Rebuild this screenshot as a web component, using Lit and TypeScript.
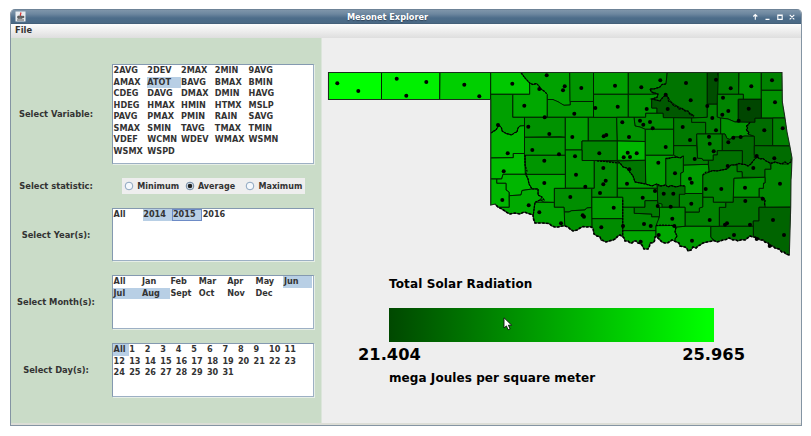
import { LitElement, html, svg, css } from "lit";
import { customElement, property } from "lit/decorators.js";
import { classMap } from "lit/directives/class-map.js";

const OUTLINE =
  "328.5,72.5 782,72.5 782.3,101.7 785,118 787,132 790,147 792,158 791.5,172 791,180 790.7,207 789.3,255 786,254 784,252 781.7,252 779,249 775,248 773,246 770,246 768,243 765,242 763,240 760,240 757,237.5 753,237 750,236 748,237.7 745,240 742,239.5 738,241 735,239.5 733,240 729,238 726,239.5 723,240 720,241 717,242 714,240.5 710,241.5 707,242 703,243 700,245 698,246 696,248 693,247 691,250 688,251 687,248.5 685,247 680,246 679,243 676,241.7 672,240 668,242.7 665,243 662,242 660,240 656.5,236.5 655,237 654.5,241 653,242.7 650,243 649.5,246 648,249 644,249 642,245 640,243.5 638,243 636,241 634,241 632,243 630,243 628,241 625,241 624,238 622.7,236.7 620,235 618,236 615,239 613,240 609,241 606,242 603,240.5 601,240 600,236.7 597,236 594,234 593,228 590,226.5 587,227 583,226.5 580,228 577,230 573,231 570,229 568,227 565,226 562,226 558,227 555,227 552,226 549,223.5 543,223 535,223 533.5,219 533,215 530,214 527,213 524,212 520,214 515,213 510,214 507,212.5 505,211 501,208.5 498,207 495,204 490.7,205 490.7,99.5 328.5,99.5";

// [fill level of the green channel, polygon points]
const COUNTIES: [number, string][] = [
  [255, "328,72 381.5,72 381.5,100 328,100"],
  [240, "381.5,72 440,72 439.7,100 381.5,100"],
  [207, "440,72 491,72 490.7,100 439.7,100"],
  [200, "490.7,72 521,72 525,78 529.7,83 529.7,94.3 490.7,94.3"],
  [168, "529.7,83 533,84.5 536.5,83.5 539,86 541,89 544,91 547.3,94.3 547.3,117.3 512.7,117.3 512.7,94.3 529.7,94.3"],
  [162, "521,72 570,72 570.3,105 564,105.3 561,104 558,101.7 555,101 553,99.5 547.3,99.5 547.3,94.3 544,91 541,89 539,86 536.5,83.5 533,84.5 529.7,83 525,78"],
  [150, "569.7,72 593.5,72 593.5,101.5 570,101.5"],
  [154, "547.3,99.5 553,99.5 558,101.7 564,105.3 570.3,105 570.3,101.5 593.5,101.5 593.5,117.3 547.3,117.3"],
  [160, "490.7,94.3 512.7,94.3 512.7,117.3 524.5,117.3 524.5,125.7 520,126 518,128 517,132 514,133 512,135 506,133.5 502,131 501.5,128 499,125 496,130 494,131 490.7,133"],
  [182, "490.7,133 494,131 496,130 499,125 501.5,128 502,131 506,133.5 512,135 514,133 517,132 518,128 520,126 524.5,125.7 525,153.5 513.3,153.5 513.3,157.7 490.7,158"],
  [146, "524.5,117.3 565.3,117.3 565.3,137.3 560,136.7 524.5,137.3"],
  [150, "524.5,137.3 565.3,137.3 565.3,155.3 524.5,155.3"],
  [158, "565.3,117.3 588.3,117.3 588.3,141 582,141 582,150 565.3,150"],
  [140, "588.3,117.3 616.7,117.3 617.3,141 588.3,141"],
  [134, "582,141 617.3,141 617.3,160.5 582,160.5"],
  [152, "565.3,150 582,150 582,160.5 594.3,160.5 594.3,188.3 565.3,188.3"],
  [140, "594.3,160.5 617.3,162 617.3,197.3 591.7,197.3 591.7,188.3 594.3,188.3"],
  [158, "593.5,72 628.3,72 628.3,94.3 593.5,94.3"],
  [150, "593.5,94.3 628.3,94.3 628.3,117.3 593.5,117.3"],
  [136, "628.3,72 667.3,72 666,84 662,84.5 660,87 654,89 650,89 651.5,92 655,93 651.7,94.3 628.3,94.3"],
  [148, "628.3,94.3 651.7,94.3 658,94 657,97.5 651.7,99 651.7,108 657,108 657,113.3 645.7,113.3 645.7,117.3 628.3,117.3"],
  [116, "667.3,72 707.3,72 707.3,117.3 691.7,118 693,115 685,110 677,106 671,102 668,97 665.7,95 660,101 651.7,99 657,97.5 658,94 655,93 651.5,92 650,89 654,89 660,87 662,84.5 666,84"],
  [88, "651.7,99 660,101 663,97 665.7,95 668,97 668.5,101 671,102 674,106 677,106 679,109 682,108.5 685,111 688,111 690,114.5 694,115.5 693,118 663.3,117.7 663,113.3 657,113.3 657,108 651.7,108"],
  [140, "645.7,113.3 663,113.3 663.3,117.7 673.7,117.7 673.7,129.3 645,129.3 640,127 635,126 634,117.3 645.7,117.3"],
  [146, "616.7,117.3 634,117.3 635,126 640,127 645.3,129.3 645.3,141.5 617.3,141"],
  [182, "617.3,141 645.3,141.5 645.3,160.3 617.3,160.3"],
  [144, "645.3,129.3 673.7,129.3 673.7,155.3 645.3,155.3"],
  [122, "673.7,117.7 691.7,118 691.7,122.3 705.7,122.3 705.7,134 696.7,134 696.7,145.7 673.7,145.7"],
  [128, "707.3,104 717.3,104 717.3,117 720.7,118 720.7,134 705.7,134 705.7,122.3 691.7,122.3 691.7,118 707.3,117.3"],
  [78, "707.3,72 717.7,72 717.7,75 719,77 717.3,104 707.3,104"],
  [124, "718.3,72 739,72 738.7,94.3 717.7,94.3"],
  [144, "739,72 761.3,72 761.3,99.3 743.3,99.3 743.3,94.3 738.7,94.3"],
  [132, "717.3,94.3 743.3,94.3 743.3,99.3 738.3,99.3 738.3,121 735,122 728,119 720.7,118 717.3,117"],
  [130, "761.3,72 783,72 783,90.3 761.3,90.3"],
  [144, "761.3,90.3 783,90.3 783,102 785.5,118 761.3,118"],
  [70, "738.3,99.3 761.3,99.3 761.3,118.3 755,118.3 755,122.3 738.3,122.3"],
  [146, "720.7,118 728,119 735,122 750,122.3 748,125 746,126 748,128 746,130 749,132 748,134 754.3,136.3 745,136 740,137 733,137 730,139.5 727,138.5 725,134 720.7,134"],
  [108, "750,122.3 755,122.3 755,118.3 772.7,118.3 772.7,145.7 754.3,145.7 754.3,136.3 748,134 749,132 746,130 748,128 746,126 748,125"],
  [128, "772.7,118 785,118 792,146 772.7,145.7"],
  [130, "696.7,134 722.3,134 722.3,150.7 717.3,150.7 717.3,155 713.3,155 713.3,160.3 703,160.3 702,158.5 697.5,158.3"],
  [106, "722.3,134 725,134 727,138.5 730,139.5 733,137 740,137 745,136 754.3,136.3 754.3,155 757,158 753,161 751,164 748,166 745,164.5 742.3,164.3 742.3,150.7 722.3,150.7"],
  [108, "754.3,145.7 793,146 793,160 791,162 788,164 785,162 781.7,164 778,163 775,162 773,163.5 770,163 766,161 763,158.5 760,159 756.7,156 754.3,158"],
  [112, "708.3,160.3 713.3,160.3 713.3,155 717.3,155 717.3,150.7 742.3,150.7 742.3,164.3 739,163.5 735,165 731,165 727,169 722,170 717,171 713,170.5 709,172"],
  [120, "736.7,165 739,163.5 742.3,164.3 745,164.5 748,166 751,164 753,161 757,157 760,159 763,158.5 766,161 770,163 771,169.3 765,169.3 765,177.3 742.3,177.3 742,171.7 737,171.7"],
  [134, "771,163 775,162 781.7,164 788,164 793,160 791.5,207 765,207.3 764.5,203 765,200 759,197.3 759,188.3 763.3,188.3 763.5,183 765,183 765,169.3 771,169.3"],
  [130, "702.7,175 706,172 709,172 713,170.5 717,171 722,170 727,169 731,165 737,165 737,171.7 742,171.7 742.3,178 734,178.3 733.3,202.3 713.3,202.3 713.3,197.3 702.7,197.3"],
  [146, "734,178.3 765,177.3 765,183 763.5,183 763.3,188.3 759,188.3 759,197.3 733.3,197.3"],
  [116, "733.3,197.3 763,197.3 765,200 764.5,203 765,207.3 759,207.3 759,221 753.3,221 753.3,226.3 719.3,226.3 719.3,207.3 725.7,207.3 725.7,202.3 733.3,202.3"],
  [100, "759,207.3 791,207.3 791,256 753.3,245 753.3,221 759,221"],
  [120, "710.7,226.3 753.3,226.3 753.3,240 717,245 714,240 710.7,237"],
  [130, "702.7,197.3 713.3,197.3 713.3,202.3 725.7,202.3 725.7,207.3 719.3,207.3 719.3,226.3 685,226.3 685,212 699.3,212 699.3,208 702.7,207"],
  [154, "676,227 685,226.3 710.7,226.3 710.7,237 717,245 688,253 674,244 675,239 677,236 675,232"],
  [156, "683.3,165 708.3,164.3 709,172 702.7,175 702.7,193.5 679.7,193.5 680.7,173 683.3,172"],
  [132, "679.3,193.5 702.7,193.5 702.7,207 699.3,208 699.3,212 685,212 685,207.3 679.3,207.3"],
  [126, "673.7,145.7 696.7,145.7 697.5,158.3 702,158.5 703,160.3 708.3,160.3 708.3,164.3 683.3,165 683.3,156 680,158 677,157 673.7,155.3"],
  [138, "665.7,158.3 677,157 680,158 683.3,156 683.3,172 680.7,173 680.7,186 676,187 671,185.5 668,187 665.7,185"],
  [158, "645.3,155.3 673.7,155.3 677,157 665.7,158.3 665.7,185 661,186 656.7,184 652,186 645.7,184"],
  [118, "617.3,161 645.3,160.3 645.7,184 640,183 635,182 633,176 629,171 626.7,168 623,167 620,163"],
  [156, "617.3,161 620,163 623,167 626.7,168 629,171 633,176 635,182 640,183 645.7,184 652,186 656.7,184 657.5,188.3 617.3,188.3"],
  [140, "617.3,188.3 657.3,188.3 657.7,200.7 645,200.7 645,207.3 622.7,207.3 622.7,197.3 617.3,197.3"],
  [138, "622.7,207.3 634.3,207.3 634.3,213.3 651.7,214 651.7,216.7 659,216.7 659,225.7 656,225.7 656,230.7 622.7,230.7"],
  [122, "634.3,207.3 645,207.3 645,200.7 657.7,200.7 658,207.3 659.5,207.3 659.5,216.7 651.7,216.7 651.7,214 634.3,213.3"],
  [110, "657.3,185.7 661,186 665.7,185 668,187 671,185.5 676,187 680.7,185.7 685,186 685,194.3 679.3,194.3 679.3,207.3 662,207.3 662,204 657.7,203"],
  [142, "659.5,207.3 685,207.3 685,226.3 676,227 672,225.5 656,225.7 659.5,216.7"],
  [164, "622.7,230.7 656,230.7 656,245 648,252 622.7,244"],
  [168, "656,225.7 672,225.5 676,227 675,232 677,236 675,239 674,246 656,245"],
  [158, "591.7,197.3 622.7,197.3 622.7,218.7 591.7,218.7"],
  [140, "591.7,218.7 622.7,218.7 622.7,244 592,244"],
  [142, "554.3,188.3 591.7,188.3 591.7,207.5 586.7,208 585,210 571.7,210.7 569,212 564,212 564,207.3 554.3,207.3"],
  [146, "564,212 569,212 571.7,210.7 585,210 586.7,208 591.7,207.5 592,235 565,235"],
  [162, "535,202.3 554.3,202.3 554.3,207.3 564,207.3 565,230 535,226 533,215 534,209"],
  [170, "525.3,174.3 565.3,174.3 565.3,188.3 554.3,188.3 554.3,202.3 544,202 540,200 542,197 538,195 538,189 532,189 529,184 528,179"],
  [150, "525.3,155.3 565.3,155.3 565.3,174.3 525.3,174.3"],
  [188, "490.7,158 513.3,157.7 513.3,153.5 524.5,153.5 525.3,174.3 503,174.3 501.7,179 490.7,179"],
  [182, "496.7,179 501.7,179 503,174.3 525.3,174.3 528,179 529,184 532,189 522,190.5 521,195 509.3,195.7 509,192 506,190 506,183.3 496.7,183.3"],
  [182, "490.7,179 496.7,179 496.7,183.3 506,183.3 506,190 509,192 509.3,207.3 500,207.3 490.7,208"],
  [170, "509.3,195.7 521,195 522,190.5 532,189 538,189 538,195 542,197 540,200 535,202.3 534,209 533,218 509,218 499,207.3 509.3,207.3"],
];

// Rivers that follow county borders, drawn with a rougher line.
const RIVERS = [
  "521,73 525,78 529.7,83 533,84.5 536.5,83.5 539,86 541,89 544,91 547.3,94.3",
  "491,133 494,131 496,130 499,125 501.5,128 502,131 506,133.5 512,135 514,133 517,132 518,128 520,126",
  "666,84 662,84.5 660,87 654,89 650,89 651.5,92 655,93 658,94 657,97.5 651.7,99 660,101 663,97 665.7,95 668,97 668.5,101 671,102 674,106 677,106 679,109 682,108.5 685,111 688,111 690,114.5 694,115.5",
  "597,161 605,161.5 612,162.5 620,163 623,167 626.7,168 629,171 633,176 635,182 640,183 645.7,184 652,186 656.7,184 661,186 665.7,185 668,187 671,185.5 676,187 680.7,185.7 685,186",
  "665.7,158.3 668,159 671,157.5 677,157 680,158 683.3,156",
  "702.7,175 706,172 709,172 713,170.5 717,171 722,170 727,169 731,165 735,165 739,163.5 742.3,164.3 745,164.5 748,166 751,164 753,161 757,157 760,159 763,158.5 766,161 770,163 773,163.5 775,162 778,163 781.7,164 785,162 788,164 791,162 791.5,158",
  "525,155 525,165 527,171 526,174 528,179 529,184 532,189 538,189 538,195 542,197 544,200 540,200 535,202.3 534,209 533,218",
  "622.7,200 622.7,236",
  "750,122.3 748,125 746,126 748,128 746,130 749,132 748,134",
  "763,198 765,200 764.5,206",
  "656,225.7 662,225 672,225.5 676,227 675,232 677,236 675,239",
];

const STATIONS =
  "337.3,83.3 358.3,91 396.7,78.7 406.3,95.7 426.3,82 464.3,84.7 479.3,96.3 512.3,83.7 546.7,75.3 539.3,89 564.7,86.3 563,90.3 581.3,88 524.3,105.7 574.3,113.7 544.7,117.3 498,125 528.3,126.7 549.3,134 572.3,137 532.3,150 " +
  "615,85.7 641.3,87.3 660.3,80.3 686,83 665.7,94.7 690.7,100.3 595.3,108 617.7,106.7 646.7,109 667.7,109 622.3,122.3 640,120.7 643.3,124.7 650,122 652.7,128.3 603.7,136.3 606.3,135 629,137 665.7,147 682.7,127 690,140 " +
  "716,79.7 730.7,88.3 751.3,86.3 772,80.3 723,97.7 775,102.3 748.7,108.7 707.3,106 728.3,111 722.3,114.7 712.3,118 738.7,120.7 716,130.3 764.3,130.3 782.7,128.3 709,136.7 733.3,137.7 740.7,137 728.3,142.3 709.7,143.7 " +
  "507.7,153.3 544.3,160.7 559,154.3 575,156.3 503.7,171.3 576,174.7 544.3,183 585.3,186.7 570.3,197 502.3,200 528.7,205.3 539.3,212.3 582.7,215.3 584,216.7 561,223.3 " +
  "599.3,153.3 627.7,152.7 636.7,153.3 623.7,157.3 630,157 603.3,168 629.3,169.3 658.3,162.7 675,173.3 605.7,180.7 603.3,184.3 600,193 627,183.7 655,191 663.7,193.7 673.3,193.7 642.7,197.7 657.7,206 670.7,206.7 613.7,207.7 672.3,218.7 644,224 650.7,226 623,226 674.3,226 601.3,227.3 658.7,235 640.7,241.7 " +
  "713.7,151.3 694.7,159 727.7,166 756.7,156 774.3,158.3 753.3,168 690,178.7 691.7,182.7 705.7,189 721.3,189 745,187.7 780,183.7 762.7,198.7 745.3,201 691.3,203.7 709.7,220 725,224.7 727,223.3 750,224.7 773,220 734,235 784,235 692,240.7 769.7,246 756.7,239";

@customElement("county-map")
class CountyMap extends LitElement {
  static styles = css`
    :host { display: block; height: 230px; }
    svg { display: block; }
    .county { stroke: #001c00; stroke-width: 0.95; }
    .river { fill: none; stroke: #000; stroke-width: 1.2; stroke-dasharray: 2 1; }
    .edge { fill: none; stroke: #1c2c1c; stroke-width: 1.1; }
    .rough { fill: none; stroke: #000; stroke-width: 1.6; stroke-dasharray: 2.5 1.5; }
  `;
  render() {
    return html`<svg width="480" height="230" viewBox="321 38 480 230">
      <defs><clipPath id="state"><polygon points=${OUTLINE} /></clipPath></defs>
      <polygon points=${OUTLINE} fill="rgb(0,150,0)" />
      <g clip-path="url(#state)">
        ${COUNTIES.map(([g, pts]) => svg`<polygon class="county" points=${pts} fill="rgb(0,${g},0)" />`)}
        ${RIVERS.map((pts) => svg`<polyline class="river" points=${pts} />`)}
      </g>
      <polygon class="edge" points=${OUTLINE} />
      <polyline class="rough" points=${OUTLINE.split(" ").slice(10, -3).join(" ")} />
      ${STATIONS.split(" ").map((p) => {
        const [x, y] = p.split(",");
        return svg`<circle cx=${x} cy=${y} r="2" />`;
      })}
    </svg>`;
  }
}

@customElement("wrap-list")
class WrapList extends LitElement {
  @property({ attribute: false }) items: string[] = [];
  @property({ attribute: false }) selected: string[] = [];
  @property() focused = "";
  @property({ type: Number }) cell = 30;
  static styles = css`
    :host {
      display: block; box-sizing: border-box; width: 202px; flex: none; font-size: 8.15px;
      background: #fff; border: 1px solid #8499b0; border-right-color: #9db0c4;
      border-bottom-color: #9db0c4; box-shadow: 1px 1px 0 #e6eee6;
    }
    .list { display: flex; flex-wrap: wrap; align-content: flex-start; }
    .item { box-sizing: border-box; height: 11.5px; line-height: 11.5px; padding-left: 0.6px; white-space: nowrap; }
    .on { background: #b8cfe5; }
    .focus { box-shadow: inset 0 0 0 1px #6d8bc6; }
  `;
  render() {
    return html`<div class="list">
      ${this.items.map((t) => html`<div
        class=${classMap({ item: true, on: this.selected.includes(t), focus: t === this.focused })}
        style="width:${this.cell}px">${t}</div>`)}
    </div>`;
  }
}

const VARIABLES =
  "2AVG 2DEV 2MAX 2MIN 9AVG AMAX ATOT BAVG BMAX BMIN CDEG DAVG DMAX DMIN HAVG HDEG HMAX HMIN HTMX MSLP PAVG PMAX PMIN RAIN SAVG SMAX SMIN TAVG TMAX TMIN VDEF WCMN WDEV WMAX WSMN WSMX WSPD".split(" ");
const MONTHS = "All Jan Feb Mar Apr May Jun Jul Aug Sept Oct Nov Dec".split(" ");
const DAYS = ["All", ...Array.from({ length: 31 }, (_, i) => String(i + 1))];

@customElement("app-root")
class AppRoot extends LitElement {
  static styles = css`
    :host {
      display: block; box-sizing: border-box; width: 811px; height: 436px; overflow: hidden;
      padding: 9px 9px 10px 10px; background: #fff; color: #333;
      font: bold 8.35px "DejaVu Sans", sans-serif;
    }
    .window {
      box-sizing: border-box; width: 792px; height: 417px; display: flex; flex-direction: column;
      border: 1px solid #8494a3; border-top: 0; border-radius: 5px 5px 0 0; overflow: hidden; background: #eee;
    }
    .title {
      flex: none; height: 15px; display: flex; align-items: center; padding: 0 5px 0 4px;
      background: linear-gradient(#5c7184 0, #7f95aa 1px, #6d879f 5px, #4d6d8a 9px, #4a6985 14px, #3f586f);
      color: #fff; text-shadow: 0 1px 1px #2f4358;
    }
    .caption { flex: 1; text-align: center; padding-right: 2px; padding-top: 1px; font-size: 8.2px; line-height: 14px; }
    .buttons { display: block; }
    .menu {
      flex: none; height: 14px; line-height: 13px; padding-left: 4px;
      background: linear-gradient(#fdfdfd, #dedede);
    }
    .body { flex: 1; display: flex; border-bottom: 2px solid #dcddd6; }
    .form {
      box-sizing: border-box; width: 311px; padding: 26px 7px 0 0; background: #cadcc8; flex: none;
      display: flex; flex-direction: column; gap: 14px; border-right: 1px solid #dce5db;
    }
    .row { display: flex; align-items: center; }
    .row > wrap-list { height: 100%; }
    .label { width: 101px; box-sizing: border-box; padding-right: 11px; text-align: center; flex: none; white-space: nowrap; }
    .h100 { height: 100px; } .h16 { height: 16px; } .h53 { height: 53px; } .h54 { height: 54px; }
    .radios {
      margin-left: 10px; width: 183px; height: 16px; background: #eee; box-sizing: border-box;
      display: flex; align-items: center; padding-left: 2.3px; font-size: 8.05px;
    }
    .radio { display: flex; align-items: center; gap: 3px; width: 60.6px; flex: none; white-space: nowrap; }
    .radio svg { flex: none; }
    .view { flex: 1; color: #000; }
    .legend { padding-left: 67px; }
    .name { font-size: 12px; letter-spacing: 0.12px; line-height: 16px; margin-top: 8px; white-space: nowrap; }
    .scale {
      position: relative; width: 324.5px; height: 34px; margin-top: 16px;
      background: linear-gradient(90deg, #004800, #00ff00 98%);
    }
    .cursor { position: absolute; left: 114px; top: 9px; }
    .ends { display: flex; justify-content: space-between; width: 387px; margin-left: -31px; font-size: 16.3px; line-height: 20px; margin-top: 3px; }
    .units { font-size: 12px; letter-spacing: 0.07px; line-height: 16px; margin-top: 5px; white-space: nowrap; }
    county-map { margin-left: -1px; }
  `;

  private radio(text: string, on = false) {
    return html`<div class="radio">
      <svg width="10" height="10" viewBox="0 0 10 10">
        <circle cx="5" cy="5" r="3.8" fill=${on ? "#dfe9f3" : "#f4f8fc"} stroke=${on ? "#5d7894" : "#7f9bb8"} stroke-width="0.9" />
        ${on ? svg`<circle cx="5" cy="5" r="2.3" fill="#222" />` : ""}
      </svg><span>${text}</span>
    </div>`;
  }

  render() {
    return html`<div class="window">
      <div class="title">
        <svg width="11" height="11" viewBox="0 0 11 11">
          <rect x="0.5" y="0.5" width="10" height="10" fill="#e9edf0" />
          <path d="M5.5 1.5C7 2.5 4.4 3.2 5.6 4.8" fill="none" stroke="#d33" stroke-width="1.3" />
          <path d="M2.8 5.2h4.4v2h-4.4zM7.5 5.3h1.3v1.3H7.5M2 9h7" fill="#777" stroke="#444" stroke-width="0.9" />
        </svg>
        <div class="caption">Mesonet Explorer</div>
        <svg class="buttons" width="45" height="11" viewBox="0 0 45 11">
          <g fill="none" stroke="#fff" stroke-width="1.1">
            <path d="M4.3 8.7V3.7M2.3 5.5 4.3 3.5l2 2M14.5 8.4h4M26.8 4h4.4v4.4h-4.4zM26.8 4.5h4.4M38.7 3.8l4.6 4.6M43.3 3.8l-4.6 4.6" />
          </g>
        </svg>
      </div>
      <div class="menu">File</div>
      <div class="body">
        <div class="form">
          <div class="row h100"><div class="label">Select Variable:</div>
            <wrap-list .items=${VARIABLES} .selected=${["ATOT"]} .cell=${33.75}></wrap-list></div>
          <div class="row h16"><div class="label">Select statistic:</div>
            <div class="radios">${this.radio("Minimum")}${this.radio("Average", true)}${this.radio("Maximum")}</div></div>
          <div class="row h53"><div class="label">Select Year(s):</div>
            <wrap-list .items=${["All", "2014", "2015", "2016"]} .selected=${["2014", "2015"]} focused="2015" .cell=${29.7}></wrap-list></div>
          <div class="row h54"><div class="label">Select Month(s):</div>
            <wrap-list .items=${MONTHS} .selected=${["Jun", "Jul", "Aug"]} .cell=${28.4}></wrap-list></div>
          <div class="row h54"><div class="label">Select Day(s):</div>
            <wrap-list .items=${DAYS} .selected=${["All"]} .cell=${15.55}></wrap-list></div>
        </div>
        <div class="view">
          <county-map></county-map>
          <div class="legend">
            <div class="name">Total Solar Radiation</div>
            <div class="scale">
              <svg class="cursor" width="10" height="14" viewBox="0 0 10 14">
                <path d="M1 0.8V11l2.4-2.1 1.7 3.9 2-.9L5.4 8.2h3.3z" fill="#fff" stroke="#111" stroke-width="0.9" />
              </svg>
            </div>
            <div class="ends"><span>21.404</span><span>25.965</span></div>
            <div class="units">mega Joules per square meter</div>
          </div>
        </div>
      </div>
    </div>`;
  }
}
